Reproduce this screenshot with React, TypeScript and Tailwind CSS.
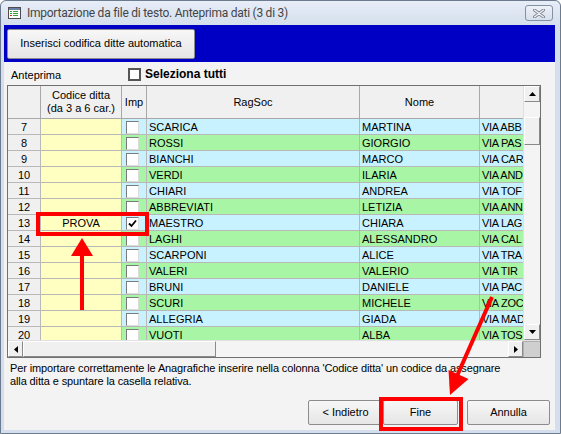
import React from "react";

const rows: [number, string, string, string][] = [
  [7, "SCARICA", "MARTINA", "VIA ABB"],
  [8, "ROSSI", "GIORGIO", "VIA PAS"],
  [9, "BIANCHI", "MARCO", "VIA CAR"],
  [10, "VERDI", "ILARIA", "VIA AND"],
  [11, "CHIARI", "ANDREA", "VIA TOF"],
  [12, "ABBREVIATI", "LETIZIA", "VIA ANN"],
  [13, "MAESTRO", "CHIARA", "VIA LAG"],
  [14, "LAGHI", "ALESSANDRO", "VIA CAL"],
  [15, "SCARPONI", "ALICE", "VIA TRA"],
  [16, "VALERI", "VALERIO", "VIA TIR"],
  [17, "BRUNI", "DANIELE", "VIA PAC"],
  [18, "SCURI", "MICHELE", "VIA ZOC"],
  [19, "ALLEGRIA", "GIADA", "VIA MAD"],
  [20, "VUOTI", "ALBA", "VIA TOS"],
];

function Check({ checked }: { checked?: boolean }) {
  return (
    <div className="w-[13px] h-[13px] bg-white border border-t-[#7a7a7a] border-l-[#7a7a7a] border-r-[#dcdcdc] border-b-[#dcdcdc] flex items-center justify-center">
      {checked && (
        <svg width="9" height="9" viewBox="0 0 9 9">
          <path d="M1 4.5 L3.5 7 L8 1.5" stroke="#000" strokeWidth="1.8" fill="none" />
        </svg>
      )}
    </div>
  );
}

function Arrow({ dir }: { dir: "up" | "down" | "left" | "right" }) {
  const pts =
    dir === "up"
      ? "0,4 7,4 3.5,0"
      : dir === "down"
      ? "0,0 7,0 3.5,4"
      : dir === "left"
      ? "4,0 4,7 0,3.5"
      : "0,0 0,7 4,3.5";
  const w = dir === "up" || dir === "down" ? 7 : 4;
  const h = dir === "up" || dir === "down" ? 4 : 7;
  return (
    <svg width={w} height={h} viewBox={`0 0 ${w} ${h}`}>
      <polygon points={pts} fill="#000" />
    </svg>
  );
}

const sbBtn =
  "bg-[#f0f0f0] border border-t-white border-l-white border-r-[#8a8a8a] border-b-[#8a8a8a] flex items-center justify-center";

const btn =
  "h-[25px] border border-[#8c8c8c] rounded-[2px] bg-gradient-to-b from-[#f7f7f7] to-[#e6e6e6] flex items-center justify-center";

export default function App() {
  return (
    <div className="relative w-[561px] h-[434px] overflow-hidden font-['Liberation_Sans',Arial,sans-serif] text-[11px] text-black">
      <div className="flex flex-col w-full h-full border border-[#6d7b8e] rounded-t-[6px] bg-[#d4deec]">
        {/* Title bar */}
        <div className="h-[24px] flex items-center pl-[7px] pr-[7px] bg-gradient-to-b from-[#e8eef8] to-[#d4deec] rounded-t-[6px]">
          <svg width="13" height="12" viewBox="0 0 13 12">
            <rect x="0.5" y="0.5" width="12" height="11" fill="#fff" stroke="#4d4d4d" />
            <rect x="1" y="1" width="11" height="2" fill="#6b7fa8" />
            <rect x="2" y="4" width="2" height="1" fill="#2a9a2a" />
            <rect x="5" y="4" width="5" height="1" fill="#3aa03a" />
            <rect x="2" y="6" width="2" height="1" fill="#2a9a2a" />
            <rect x="5" y="6" width="5" height="1" fill="#3aa03a" />
            <rect x="2" y="8" width="2" height="1" fill="#c03030" />
            <rect x="5" y="8" width="5" height="1" fill="#3aa03a" />
          </svg>
          <span className="ml-[6px] font-['Roboto',sans-serif] text-[12px] tracking-[-0.25px] text-[#444] whitespace-nowrap">
            Importazione da file di testo. Anteprima dati (3 di 3)
          </span>
          <div className="ml-auto w-[28px] h-[16px] rounded-[3px] border border-[#8391a3] bg-gradient-to-b from-[#eef2f8] to-[#d6dfeb] flex items-center justify-center">
            <svg width="12" height="9" viewBox="0 0 12 9">
              <path d="M1.5 1 L10.5 8 M10.5 1 L1.5 8" stroke="#7d8590" strokeWidth="3" strokeLinecap="round" />
              <path d="M1.5 1 L10.5 8 M10.5 1 L1.5 8" stroke="#f4f6f9" strokeWidth="1.2" strokeLinecap="round" />
            </svg>
          </div>
        </div>

        {/* Body */}
        <div className="flex-1 flex flex-col pl-[3px] pr-[5px] pb-[3px]">
          {/* Blue band */}
          <div className="h-[37px] bg-[#0000c4] flex items-center pl-[3px]">
            <div className={`w-[188px] !h-[30px] ${btn}`}>Inserisci codifica ditte automatica</div>
          </div>

          {/* Content */}
          <div className="flex-1 bg-[#f3f3f3] flex flex-col">
            <div className="h-[14px] mt-[5px] flex items-center pl-[7px]">
              <span className="w-[117px] pt-[3px]">Anteprima</span>
              <div className="w-[13px] h-[13px] border-2 border-[#555] bg-white" />
              <span className="ml-[4px] font-bold text-[12px]">Seleziona tutti</span>
            </div>

            {/* Grid */}
            <div className="ml-[3px] mt-[4px] w-[534px] h-[273px] border border-[#707070] flex flex-col bg-white">
              <div className="flex h-[254px]">
                <div className="w-[515px] overflow-hidden">
                  <div className="grid grid-cols-[33px_81px_25px_213px_120px_90px] w-max">
                    <div className="h-[33px] border-r border-b border-[#a8a8a8] bg-[#f0f0f0]" />
                    <div className="h-[33px] border-r border-b border-[#a8a8a8] bg-[#f0f0f0] flex items-center justify-center text-center leading-[13px]">
                      Codice ditta
                      <br />
                      (da 3 a 6 car.)
                    </div>
                    <div className="h-[33px] border-r border-b border-[#a8a8a8] bg-[#f0f0f0] flex items-center justify-center">
                      Imp
                    </div>
                    <div className="h-[33px] border-r border-b border-[#a8a8a8] bg-[#f0f0f0] flex items-center justify-center">
                      RagSoc
                    </div>
                    <div className="h-[33px] border-r border-b border-[#a8a8a8] bg-[#f0f0f0] flex items-center justify-center">
                      Nome
                    </div>
                    <div className="h-[33px] border-r border-b border-[#a8a8a8] bg-[#f0f0f0]" />

                    {rows.map(([n, rag, nome, via]) => {
                      const bg = n % 2 === 1 ? "bg-[#c8f2ff]" : "bg-[#a8f5a6]";
                      const cell =
                        "h-[16px] border-r border-b border-[#b8b8b8] whitespace-nowrap overflow-hidden leading-[16px]";
                      return (
                        <React.Fragment key={n}>
                          <div className={`${cell} bg-[#f0f0f0] text-center`}>{n}</div>
                          <div className={`${cell} bg-[#ffffc2] text-center`}>{n === 13 ? "PROVA" : ""}</div>
                          <div className={`${cell} ${bg} pl-[4px] pt-[2px]`}>
                            <Check checked={n === 13} />
                          </div>
                          <div className={`${cell} ${bg} pl-[2px]`}>{rag}</div>
                          <div className={`${cell} ${bg} pl-[2px]`}>{nome}</div>
                          <div className={`${cell} ${bg} pl-[2px] tracking-[-0.3px]`}>{via}</div>
                        </React.Fragment>
                      );
                    })}
                  </div>
                </div>
                {/* Vertical scrollbar */}
                <div className="w-[17px] flex flex-col bg-[#f4f4f4] border-l border-[#e0e0e0]">
                  <div className={`h-[16px] ${sbBtn}`}>
                    <Arrow dir="up" />
                  </div>
                  <div className="h-[15px]" />
                  <div className={`h-[28px] ${sbBtn}`} />
                  <div className="flex-1" />
                  <div className={`h-[16px] ${sbBtn}`}>
                    <Arrow dir="down" />
                  </div>
                </div>
              </div>
              {/* Horizontal scrollbar */}
              <div className="flex h-[17px] border-t border-[#e0e0e0]">
                <div className={`w-[15px] ${sbBtn}`}>
                  <Arrow dir="left" />
                </div>
                <div className={`w-[193px] ${sbBtn}`} />
                <div className="flex-1 bg-[#f4f4f4]" />
                <div className={`w-[15px] ${sbBtn}`}>
                  <Arrow dir="right" />
                </div>
                <div className="w-[17px] bg-[#cfcfcf] border-l border-t border-[#b0b0b0]" />
              </div>
            </div>

            {/* Footer text */}
            <div className="mt-[4px] pl-[6px] leading-[13px] whitespace-nowrap tracking-[-0.12px]">
              Per importare correttamente le Anagrafiche inserire nella colonna 'Codice ditta' un codice da assegnare
              <br />
              alla ditta e spuntare la casella relativa.
            </div>

            {/* Buttons */}
            <div className="mt-[12px] flex justify-end pr-[5px]">
              <div className={`w-[75px] ${btn}`}>&lt; Indietro</div>
              <div className={`w-[75px] ${btn}`}>Fine</div>
              <div className={`ml-[9px] w-[83px] ${btn}`}>Annulla</div>
            </div>
          </div>
        </div>
      </div>

      {/* Red annotations */}
      <svg className="absolute inset-0 pointer-events-none" width="561" height="434" viewBox="0 0 561 434">
        <rect x="38" y="214" width="109" height="20" fill="none" stroke="#ff0000" strokeWidth="4" />
        <line x1="82" y1="310" x2="82" y2="252" stroke="#ff0000" strokeWidth="4" />
        <polygon points="71,256 93,256 82,238" fill="#ff0000" />
        <line x1="492" y1="297" x2="457" y2="376" stroke="#ff0000" strokeWidth="4" />
        <polygon points="450,395 448.5,370 468.5,379" fill="#ff0000" />
        <rect x="381" y="399" width="80" height="30" fill="none" stroke="#ff0000" strokeWidth="4" />
      </svg>
    </div>
  );
}
